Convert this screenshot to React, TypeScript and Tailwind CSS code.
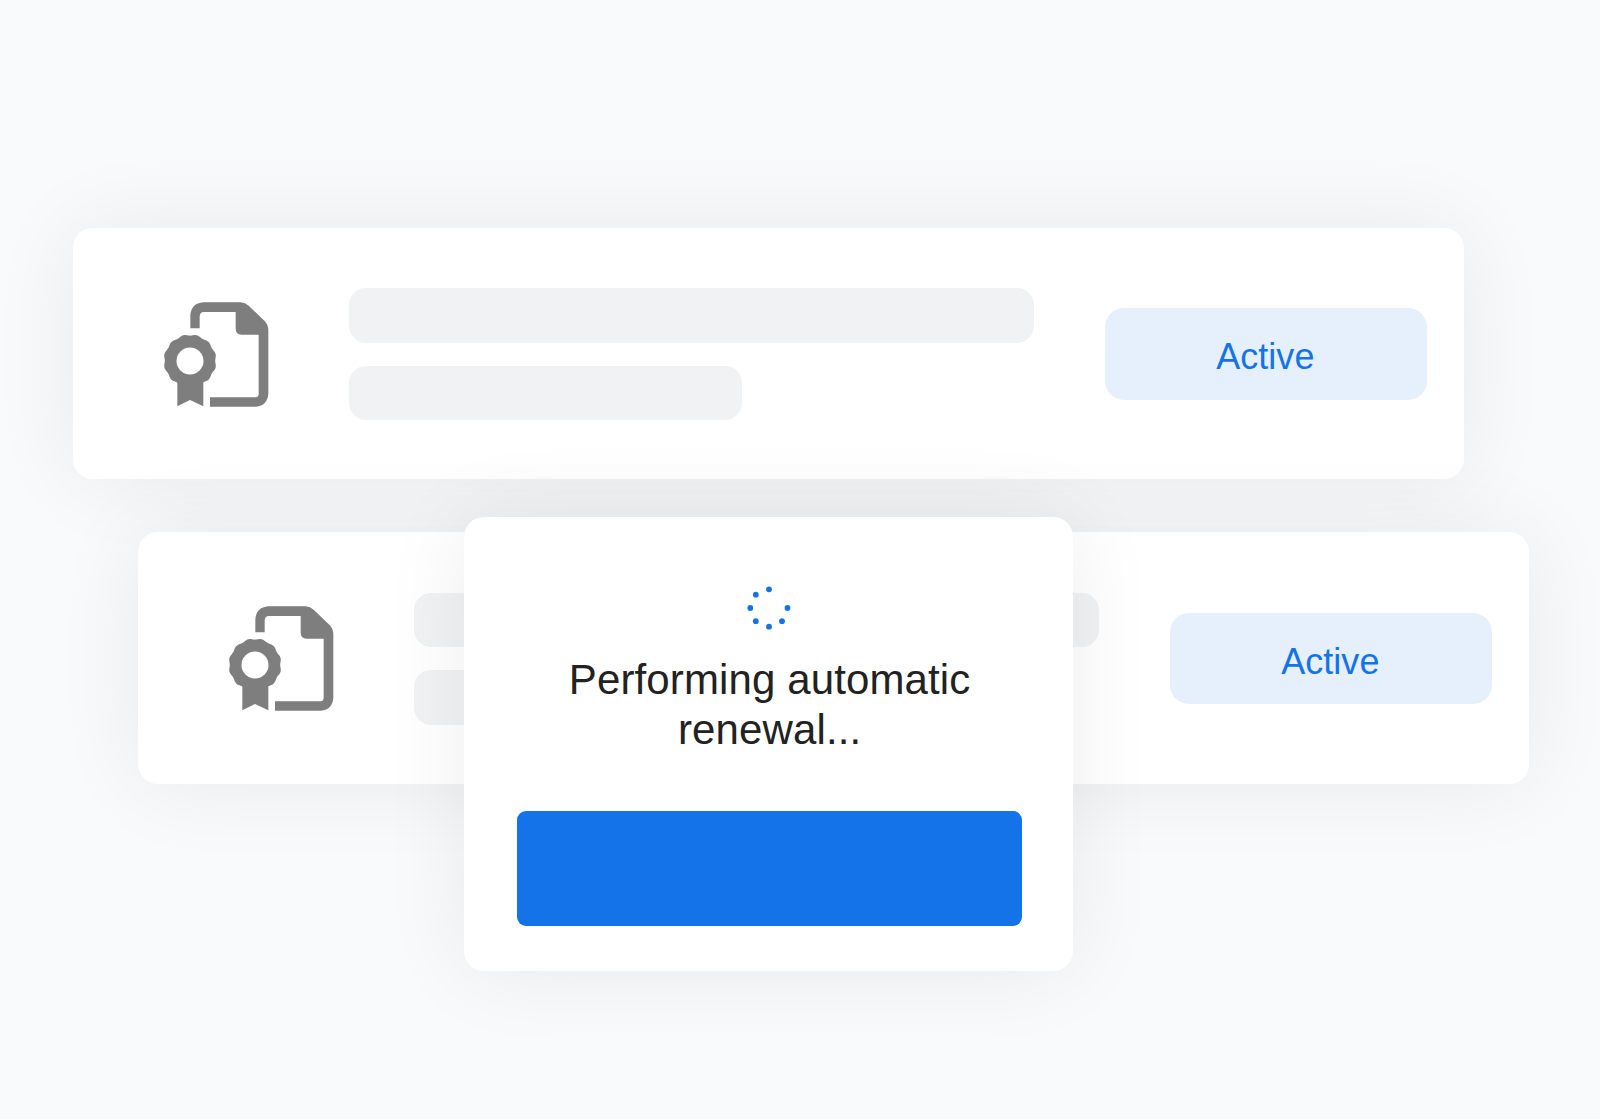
const sealPoints = Array.from({ length: 240 }, (_, i) => {
  const t = (i / 240) * Math.PI * 2;
  const r = 77.5 - 1.9 * Math.cos(12 * t);
  return `${(120 + r * Math.cos(t)).toFixed(2)},${(210.5 + r * Math.sin(t)).toFixed(2)}`;
}).join(" ");

function CertificateIcon() {
  return (
    <svg
      viewBox="42 34 315 315"
      className="mt-[74px] ml-[91px] size-[105px] shrink-0 text-[#7e7e7e]"
      fill="currentColor"
      aria-hidden="true"
    >
      <path d="M121 113V75Q123 38 160 35H272Q286 36 296 45L343 90Q355 102 355 119V309Q352 345 318 348H180V320H314Q326 320 326 309V132H274Q257 130 257 114V64H162Q150 64 149 77V113Z" />
      <path d="M82 270V347L120 328L160 347V270Z" />
      <polygon points={sealPoints} />
      <circle cx="120" cy="211" r="40.5" fill="#fff" />
    </svg>
  );
}

function CertificateCard({ className }: { className: string }) {
  return (
    <div
      className={`flex h-[251.5px] w-[1390.5px] shrink-0 items-start rounded-[20px] bg-white shadow-[0_0_88px_rgba(20,24,32,0.07)] ${className}`}
    >
      <CertificateIcon />
      <div className="mt-[60.5px] ml-[79.5px] flex w-[685px] flex-col gap-[23px]">
        <div className="h-[54.5px] rounded-[17px] bg-[#f0f2f4]" />
        <div className="h-[54.5px] w-[393.5px] rounded-[17px] bg-[#f0f2f4]" />
      </div>
      <div className="mt-[80.5px] ml-[71.5px] flex h-[91.5px] w-[322px] items-center justify-center rounded-[19px] bg-[#e6f0fd] pt-[7px] pr-[2px] text-[36px] tracking-[0.05px] text-[#1473e8]">
        Active
      </div>
    </div>
  );
}

const dots = [
  [35, 16.3],
  [21.8, 21.7],
  [16.3, 35],
  [21.8, 48.2],
  [35, 53.7],
  [48, 48.2],
  [53.5, 35],
];

export default function App() {
  return (
    <main className="relative flex h-[1119px] w-[1600px] flex-col overflow-hidden bg-[#f9fafc] font-['Liberation_Sans',Arial,sans-serif]">
      <CertificateCard className="mt-[227.5px] ml-[73.3px]" />
      <CertificateCard className="mt-[53px] ml-[138.3px]" />
      <section className="absolute top-[517px] left-[464px] flex h-[454px] w-[609.3px] flex-col items-center rounded-[20px] bg-white shadow-[0_0_88px_rgba(20,24,32,0.07)]">
        <svg viewBox="0 0 70 70" className="mt-[55.5px] ml-[1px] size-[70px] shrink-0" fill="#1473e8" aria-hidden="true">
          {dots.map(([x, y]) => (
            <circle key={`${x}-${y}`} cx={x} cy={y} r="2.9" />
          ))}
        </svg>
        <p className="mt-[12.5px] ml-[2px] w-[450px] text-center text-[42px] leading-[50px] tracking-[0.12px] text-[#222]">
          Performing automatic renewal...
        </p>
        <div className="mt-[56px] ml-[1.4px] h-[115px] w-[505px] rounded-[9px] bg-[#1473e8]" />
      </section>
    </main>
  );
}
